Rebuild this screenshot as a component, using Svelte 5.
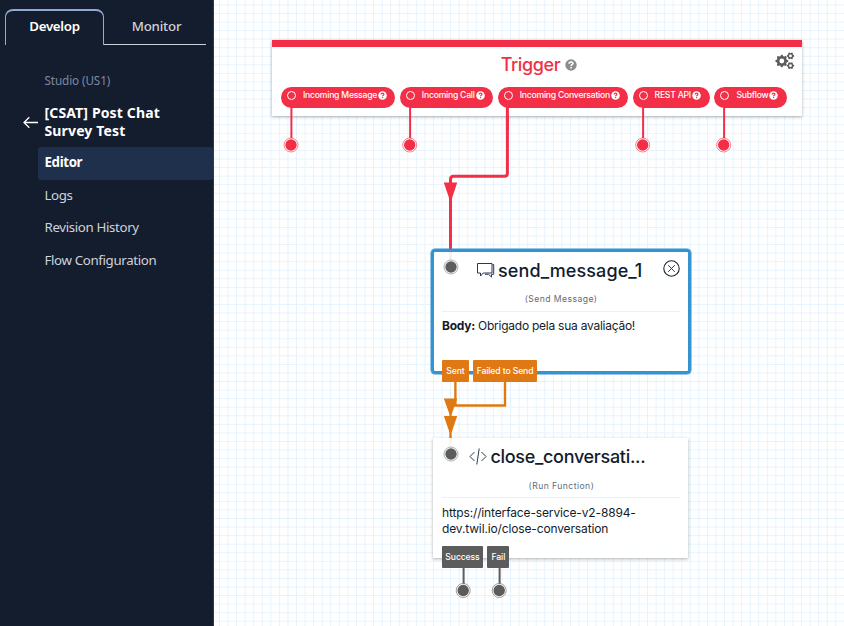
<script>
  const tabs = ['Develop', 'Monitor'];
  const links = ['Editor', 'Logs', 'Revision History', 'Flow Configuration'];
  const triggers = [
    { label: 'Incoming Message', w: 114 },
    { label: 'Incoming Call', w: 93 },
    { label: 'Incoming Conversation', w: 130 },
    { label: 'REST API', w: 77 },
    { label: 'Subflow', w: 73 }
  ];
  const ends = [
    { x: 291, y: 145, from: 107, c: '#f22f46' },
    { x: 409.7, y: 145, from: 107, c: '#f22f46' },
    { x: 642.7, y: 145, from: 107, c: '#f22f46' },
    { x: 723.7, y: 145, from: 107, c: '#f22f46' },
    { x: 463.2, y: 590.5, from: 568, c: '#5c5c5c' },
    { x: 499.2, y: 590.5, from: 568, c: '#5c5c5c' }
  ];
  const gear = (cx, cy, r, teeth) => {
    let d = '';
    const n = teeth * 4;
    for (let i = 0; i < n; i++) {
      const rad = i % 4 < 2 ? r : r * 0.78;
      const a = ((i - 0.5) / n) * Math.PI * 2;
      d += `${i ? 'L' : 'M'}${(cx + rad * Math.cos(a)).toFixed(2)} ${(cy + rad * Math.sin(a)).toFixed(2)}`;
    }
    const h = r * 0.38;
    return `${d}ZM${cx - h} ${cy}a${h} ${h} 0 1 0 ${h * 2} 0a${h} ${h} 0 1 0 ${-h * 2} 0Z`;
  };
</script>

{#snippet help(size, bg, fg)}
  <svg class="help" width={size} height={size} viewBox="0 0 12 12">
    <circle cx="6" cy="6" r="5.7" fill={bg} />
    <path d="M4.1 4.7C4.1 2.4 8 2.4 7.9 4.5C7.8 5.8 6.1 5.6 6.1 7" fill="none" stroke={fg} stroke-width="1.6" />
    <rect x="5.3" y="7.9" width="1.6" height="1.6" fill={fg} />
  </svg>
{/snippet}

<div class="app">
  <aside>
    <nav class="tabs">
      {#each tabs as tab, i}
        <div class="tab" class:active={i === 0}>{tab}</div>
      {/each}
    </nav>
    <div class="product">Studio (US1)</div>
    <div class="flow-name">
      <svg width="15" height="14" viewBox="0 0 15 14">
        <path d="M15 7.500H1.2M6.300 2.200L1 7.500l5.300 5.300" fill="none" stroke="#fff" stroke-width="1.3" />
      </svg>
      <h1>[CSAT] Post Chat<br />Survey Test</h1>
    </div>
    <div class="links">
      {#each links as link, i}
        <div class="link" class:active={i === 0}>{link}</div>
      {/each}
    </div>
  </aside>

  <main>
    <svg class="layer" width="630" height="626" viewBox="214 0 630 626">
      <defs>
        <pattern id="grid" x="433" y="158.5" width="8.56" height="8.56" patternUnits="userSpaceOnUse">
          <path d="M.5 0V8.56M0 .5H8.56" stroke="#e5f3fe" fill="none" />
        </pattern>
      </defs>
      <rect x="214" width="630" height="626" fill="url(#grid)" />
      <path d="M507.4 100V173.2q0 3-3 3H453.500q-3 0-3 3V262" fill="none" stroke="#f22f46" stroke-width="3" />
      <path d="M455.400 378V405.500M505 378V405.500H450.500V450" fill="none" stroke="#e07913" stroke-width="2.4" />
    </svg>

    <section class="card trigger">
      <div class="trigger-title"><span>Trigger</span>{@render help(12, '#8c8c8c', '#fff')}</div>
      <svg class="gears" width="20" height="18" viewBox="0 0 20 18" fill="#5c5c5c" fill-rule="evenodd">
        <path d={gear(6.8, 9, 6.4, 8)} />
        <path d={gear(15.5, 3.9, 3.7, 6)} />
        <path d={gear(15.5, 13.7, 3.7, 6)} />
      </svg>
      <div class="pills">
        {#each triggers as t}
          <div class="pill" style="width:{t.w}px">
            <i></i><span>{t.label}</span>{@render help(9, '#fff', '#f22f46')}
          </div>
        {/each}
      </div>
    </section>

    <section class="card widget send">
      <header>
        <svg width="18" height="17" viewBox="0 0 18 17" fill="none" stroke="#2b3950" stroke-width="1">
          <path d="M.5 1.500H15V11H6.200L3.500 14V11H.5Z" />
          <path d="M15.500 2.500H16.700V12.300H14.500V15L11.500 12.300H8" />
        </svg>
        <h2>send_message_1</h2>
        <svg class="close" width="17" height="17" viewBox="0 0 17 17" fill="none" stroke="#1b2436">
          <circle cx="8.500" cy="8.500" r="7.700" stroke-width="1.1" />
          <path d="M5.200 5.200l6.600 6.600M11.800 5.200l-6.600 6.600" stroke-width=".9" />
        </svg>
      </header>
      <div class="kind">(Send Message)</div>
      <p><b>Body:</b> Obrigado pela sua avaliação!</p>
      <footer><span class="w1">Sent</span><span class="w2">Failed to Send</span></footer>
    </section>

    <section class="card widget run">
      <header>
        <svg width="18" height="17" viewBox="0 0 18 17" fill="none" stroke="#2b3950" stroke-width="1">
          <path d="M5.500 4L1 8.500L5.500 13M12.500 4L17 8.500L12.500 13M10.200 .5L7.800 16.500" />
        </svg>
        <h2>close_conversati...</h2>
      </header>
      <div class="kind">(Run Function)</div>
      <p>https://interface-service-v2-8894-<br />dev.twil.io/close-conversation</p>
      <footer><span class="w3">Success</span><span class="w4">Fail</span></footer>
    </section>

    <svg class="layer" width="630" height="626" viewBox="214 0 630 626">
      {#each ends as e}
        <path d="M{e.x + 0.4} {e.from}V{e.y}" stroke={e.c} stroke-width="2" />
        <circle cx={e.x} cy={e.y} r="7" fill="#fff" stroke={e.c} stroke-width=".6" />
        <circle cx={e.x} cy={e.y} r="5.700" fill={e.c} />
      {/each}
      {#each [267, 454] as y}
        <circle cx="451" cy={y} r="7" fill="#fff" stroke="#777" stroke-width=".6" />
        <circle cx="451" cy={y} r="5.700" fill="#5c5c5c" />
      {/each}
      <path d="M507.400 107V130" stroke="#f22f46" stroke-width="3" />
      <path d="M443.800 182.500H457.200L451.800 199H449.400Z" fill="#f22f46" />
      <path d="M443.800 398.500H457.200L451.800 414H449.400ZM443.800 416H457.200L451.800 432H449.400Z" fill="#e07913" />
    </svg>
  </main>
</div>

<style>
  :global(body) { margin: 0; }
  .app { display: flex; width: 844px; height: 626px; overflow: hidden; font-family: Inter, sans-serif; color: #121c2d; }
  aside { width: 214px; flex: none; box-sizing: border-box; background: #141d2d; color: #cfd3dc; font: 13.300px "Noto Sans", sans-serif; border-right: 1px solid #303a4c; }
  .tabs { display: flex; padding: 9px 7px 0 5px; }
  .tab { width: 102px; height: 36px; box-sizing: border-box; line-height: 35px; text-align: center; border-bottom: 1px solid #cbd0db; font-weight: 500; padding-left: 3px; letter-spacing: -.2px; }
  .tab.active { width: 99px; padding-left: 0; color: #fff; font-weight: 600; border: 1px solid #9aabc5; border-top: 2px solid #8fa9cf; border-bottom: 0; border-radius: 8px 8px 0 0; line-height: 31px; letter-spacing: -.3px; }
  .product { margin: 26px 0 0 44.500px; font-size: 11.700px; line-height: 18px; color: #7c89a3; letter-spacing: -.1px; }
  .flow-name { display: flex; align-items: center; margin: 15px 0 0 23px; }
  h1 { margin: 0 0 0 6.500px; font-size: 14px; line-height: 18px; font-weight: 700; color: #fff; letter-spacing: .14px; }
  .links { padding: 7px 0 0 38px; }
  .link { height: 32.600px; line-height: 31px; padding-left: 6.500px; box-sizing: border-box; border-radius: 3px; letter-spacing: -.36px; }
  .link.active { background: #1f304c; color: #fff; font-weight: 700; }
  main { position: relative; flex: 1; background: #fff; }
  .layer { position: absolute; left: 0; top: 0; }
  .card { position: absolute; box-sizing: border-box; background: rgba(255, 255, 255, .92); box-shadow: 0 1px 3px rgba(40, 50, 65, .38); }
  .trigger { left: 58px; top: 39.500px; width: 530px; height: 76.400px; border-top: 7px solid #f22f46; }
  .trigger-title { display: flex; justify-content: center; align-items: center; gap: 5px; padding: 6px 0 0 4px; height: 25px; color: #f22f46; font-size: 18px; font-weight: 500; letter-spacing: -.4px; }
  .trigger-title span { margin-top: -2px; }
  .help { display: block; flex: none; }
  .gears { position: absolute; right: 7.500px; top: 5.500px; }
  .pills { display: flex; gap: 4.850px; padding: 9px 0 0 9px; }
  .pill { display: flex; height: 21px; box-sizing: border-box; border-radius: 11px; background: #f22f46; color: #fff; font-size: 8.600px; font-weight: 500; line-height: 16px; padding-left: 6px; letter-spacing: -.22px; white-space: nowrap; }
  .pill i { width: 9px; height: 9px; flex: none; box-sizing: border-box; border: 1.200px solid #fff; border-radius: 50%; margin: 4px 7px 0 0; }
  .pill > :global(svg) { margin: 4px 0 0 1px; }
  .widget { padding: 0 8px; left: 219px; width: 255px; display: flex; flex-direction: column; }
  .send { left: 217px; top: 249px; width: 260px; height: 125px; border: 3px solid #3594d0; border-radius: 4px; box-shadow: 0 0 0 .5px #3594d0; }
  .run { top: 438px; height: 120px; padding: 2px 8px 0 9px; left: 219.400px; }
  header { display: flex; align-items: center; height: 36px; padding-left: 35px; }
  .run header { height: 33px; padding-left: 27px; }
  h2 { margin: 1px 0 0 3px; font-size: 18px; font-weight: 500; line-height: 22px; letter-spacing: .1px; }
  .run h2 { letter-spacing: -.3px; margin-top: 0; }
  .close { margin: -3px 0 0 auto; }
  .kind { height: 23px; line-height: 22px; font-size: 8.600px; letter-spacing: .45px; color: #606b78; text-align: center; border-bottom: 1px solid #eeeff0; }
  .run .kind { height: 24px; line-height: 27px; }
  p { margin: 6px 0 0; font-size: 12px; line-height: 16px; white-space: nowrap; letter-spacing: -.25px; }
  .run p { margin: 7px 0 0 -.4px; letter-spacing: -.14px; }
  footer { position: absolute; left: 8px; bottom: -11px; display: flex; gap: 4px; }
  .run footer { left: 8.600px; bottom: -10px; gap: 4.400px; }
  footer span { height: 22px; line-height: 22px; border-radius: 1px; background: #e07913; color: #fff; font-size: 8.600px; font-weight: 500; text-align: center; white-space: nowrap; letter-spacing: -.1px; }
  .run footer span { background: #5c5c5c; }
  .w1 { width: 27px; } .w2 { width: 64px; } .w3 { width: 41px; } .w4 { width: 22px; }
</style>
